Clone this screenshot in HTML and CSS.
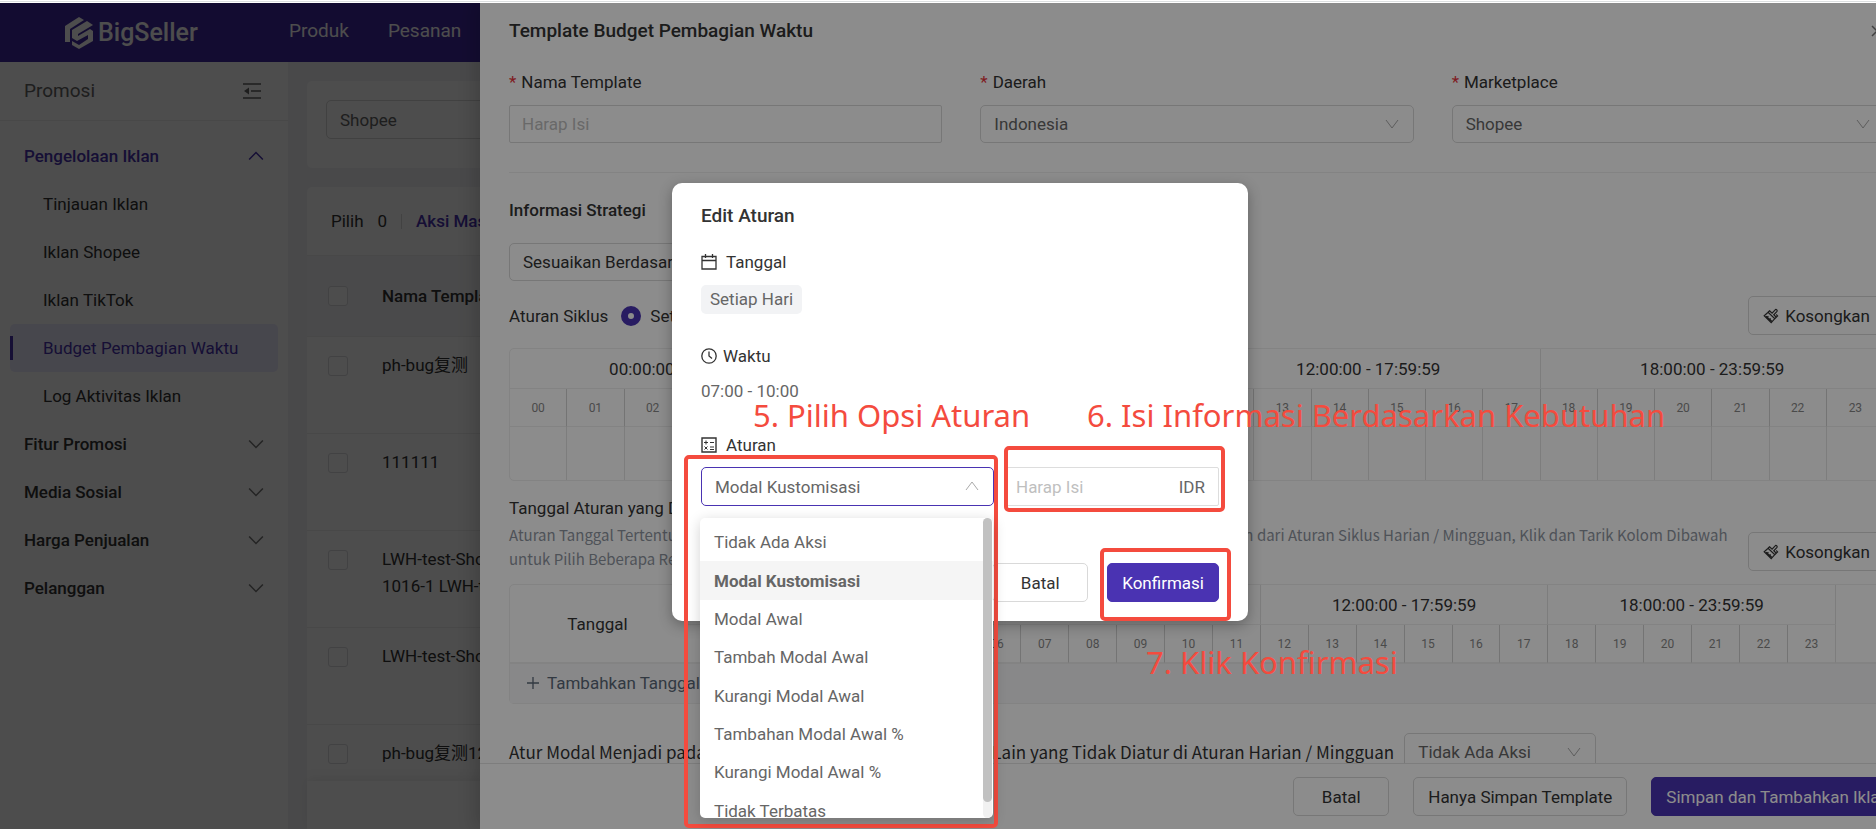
FILE: index.html
```html
<!DOCTYPE html>
<html lang="id">
<head>
  <meta charset="UTF-8" />
  <meta name="viewport" content="width=device-width, initial-scale=1.0"/>
  <title>Template Budget Pembagian Waktu</title>
  <link rel="stylesheet" href="styles.css">
</head>
<body>
  <svg class="defs" aria-hidden="true">
    <symbol id="down" viewBox="0 0 14 14"><path d="M1 3l6 8 6-8" fill="none" stroke="currentColor"/></symbol>
    <symbol id="arrow" viewBox="0 0 14 14"><path d="M1 4l6 6 6-6" fill="none" stroke="currentColor" stroke-width="1.3"/></symbol>
    <symbol id="brush" viewBox="0 0 16 16"><path d="M6.5 2.8l2.6 2.4 3.3-3.6c.9-.6 2.3.8 1.6 1.8l-3.2 3.4 2.5 2.4-1.5 1.5-6.8-6.4zM5.1 4.3L1.2 7.7l7 7 3.6-4M3.6 9.8l1.8-1.6M5.8 12.2l1.9-1.7M13.2 6.5l1.4 1.4-1.3 1.3M3.1 8.1l5.9 5.4" fill="none" stroke="currentColor" stroke-width="1.2"/></symbol>
  </svg>

  <div class="top-edge"></div>

  <div class="app">
    <header class="header">
      <div class="logo">
        <svg width="28" height="32" viewBox="0 0 28 32">
          <path d="M0 25V9L14 0l5 3L5 12v13z" fill="currentColor"/>
          <path d="M7 13L22 4l6 4-15 9v2l12-7 3 2v10L14 32l-7-4v-4l7 4 9-6v-4l-11 6-5-3z" fill="currentColor"/>
        </svg>
        <span>BigSeller</span>
      </div>
      <nav class="nav">
        <a href="#">Produk</a>
        <a href="#">Pesanan</a>
      </nav>
    </header>

    <div class="layout">
      <aside class="sidebar">
        <div class="sidebar-title">
          <span>Promosi</span>
          <svg width="18" height="16" viewBox="0 0 18 16"><path d="M0 1h18M8 8h10M0 15h18" stroke="currentColor" stroke-width="1.6"/><path d="M1 8l5-3.500v7z" fill="currentColor"/></svg>
        </div>
        <ul class="menu">
          <li class="group open"><a href="#">Pengelolaan Iklan</a><svg><use href="#arrow"/></svg></li>
          <li class="item"><a href="#">Tinjauan Iklan</a></li>
          <li class="item"><a href="#">Iklan Shopee</a></li>
          <li class="item"><a href="#">Iklan TikTok</a></li>
          <li class="item active"><a href="#">Budget Pembagian Waktu</a></li>
          <li class="item"><a href="#">Log Aktivitas Iklan</a></li>
          <li class="group"><a href="#">Fitur Promosi</a><svg><use href="#arrow"/></svg></li>
          <li class="group"><a href="#">Media Sosial</a><svg><use href="#arrow"/></svg></li>
          <li class="group"><a href="#">Harga Penjualan</a><svg><use href="#arrow"/></svg></li>
          <li class="group"><a href="#">Pelanggan</a><svg><use href="#arrow"/></svg></li>
        </ul>
      </aside>

      <main class="main">
        <div class="card filter">
          <select class="control" aria-label="Platform"><option>Shopee</option></select>
        </div>
        <div class="card list">
          <div class="toolbar"><span>Pilih</span><span>0</span><i></i><a href="#">Aksi Massal</a></div>
          <table class="list-table">
            <thead>
              <tr><th class="check"><input type="checkbox" aria-label="Pilih semua"></th><th>Nama Template</th></tr>
            </thead>
            <tbody>
              <tr><td class="check"><input type="checkbox" aria-label="ph-bug复测"></td><td>ph-bug复测</td></tr>
              <tr><td class="check"><input type="checkbox" aria-label="111111"></td><td>111111</td></tr>
              <tr><td class="check"><input type="checkbox" aria-label="LWH-test-Shopee 1016-1"></td><td>LWH-test-Shopee<br>1016-1 LWH-test</td></tr>
              <tr><td class="check"><input type="checkbox" aria-label="LWH-test-Shopee"></td><td>LWH-test-Shopee</td></tr>
              <tr><td class="check"><input type="checkbox" aria-label="ph-bug复测12"></td><td>ph-bug复测12</td></tr>
            </tbody>
          </table>
        </div>
        <div class="pager"></div>
      </main>
    </div>

    <div class="mask"></div>

    <section class="drawer">
      <div class="drawer-body">
        <div class="drawer-head">
          <h1>Template Budget Pembagian Waktu</h1>
          <button class="close" aria-label="Tutup"><svg width="12" height="12" viewBox="0 0 12 12"><path d="M1 1l10 10M11 1L1 11" stroke="currentColor" stroke-width="1.5"/></svg></button>
        </div>

        <div class="fields">
          <div class="field">
            <label for="name">Nama Template</label>
            <input class="control square" id="name" type="text" placeholder="Harap Isi">
          </div>
          <div class="field">
            <label for="region">Daerah</label>
            <div class="select"><select class="control" id="region"><option>Indonesia</option></select><svg><use href="#down"/></svg></div>
          </div>
          <div class="field">
            <label for="market">Marketplace</label>
            <div class="select"><select class="control" id="market"><option>Shopee</option></select><svg><use href="#down"/></svg></div>
          </div>
        </div>

        <h2>Informasi Strategi</h2>
        <button class="btn strategy">Sesuaikan Berdasarkan Waktu</button>

        <div class="cycle">
          <span>Aturan Siklus</span>
          <label><input type="radio" name="cycle" checked>Setiap Hari</label>
          <button class="btn clear"><svg><use href="#brush"/></svg>Kosongkan</button>
        </div>

        <table class="hours" id="cycle-table">
          <thead>
            <tr>
              <th colspan="6">00:00:00 - 05:59:59</th>
              <th colspan="6">06:00:00 - 11:59:59</th>
              <th colspan="6">12:00:00 - 17:59:59</th>
              <th colspan="6">18:00:00 - 23:59:59</th>
            </tr>
            <tr class="hour-row"></tr>
          </thead>
          <tbody><tr class="slot-row"></tr></tbody>
        </table>

        <div class="dates">
          <div>
            <h3>Tanggal Aturan yang Ditentukan</h3>
            <p>Aturan Tanggal Tertentu Akan Dijalankan Terlebih Dahulu pada Waktu yang Tersedia dan Lebih Diutamakan dari Aturan Siklus Harian / Mingguan, Klik dan Tarik Kolom Dibawah untuk Pilih Beberapa Rentang Waktu</p>
          </div>
          <button class="btn clear"><svg><use href="#brush"/></svg>Kosongkan</button>
        </div>

        <table class="hours dated" id="date-table">
          <colgroup><col class="col-date"><col span="24"><col class="col-last"></colgroup>
          <thead>
            <tr>
              <th rowspan="2">Tanggal</th>
              <th colspan="6">00:00:00 - 05:59:59</th>
              <th colspan="6">06:00:00 - 11:59:59</th>
              <th colspan="6">12:00:00 - 17:59:59</th>
              <th colspan="6">18:00:00 - 23:59:59</th>
              <th rowspan="2"></th>
            </tr>
            <tr class="hour-row"></tr>
          </thead>
          <tbody>
            <tr><td colspan="26" class="add"><button><svg width="12" height="12" viewBox="0 0 12 12"><path d="M6 0v12M0 6h12" stroke="currentColor" stroke-width="1.3"/></svg>Tambahkan Tanggal</button></td></tr>
          </tbody>
        </table>

        <div class="other">
          <label for="other">Atur Modal Menjadi pada Setiap Tanggal atau Rentang Waktu Lain yang Tidak Diatur di Aturan Harian / Mingguan</label>
          <div class="select"><select class="control" id="other"><option>Tidak Ada Aksi</option></select><svg><use href="#down"/></svg></div>
        </div>
      </div>
      <footer class="drawer-foot">
        <button class="btn cancel">Batal</button>
        <button class="btn">Hanya Simpan Template</button>
        <button class="btn primary">Simpan dan Tambahkan Iklan</button>
      </footer>
    </section>

    <div class="mask"></div>

    <section class="modal" role="dialog" aria-labelledby="modal-title">
      <h2 id="modal-title">Edit Aturan</h2>
      <div class="row-title">
        <svg width="16" height="16" viewBox="0 0 16 16"><path d="M1 2.500h14v12.500H1zM1 6.500h14M4.500 0v4M11.500 0v4" fill="none" stroke="currentColor" stroke-width="1.3"/></svg>Tanggal
      </div>
      <span class="tag">Setiap Hari</span>
      <div class="row-title time-title">
        <svg width="16" height="16" viewBox="0 0 16 16"><circle cx="8" cy="8" r="7.200" fill="none" stroke="currentColor" stroke-width="1.3"/><path d="M8 3.500V8l3 2.500" fill="none" stroke="currentColor" stroke-width="1.3"/></svg>Waktu
      </div>
      <div class="time">07:00 - 10:00</div>
      <div class="row-title">
        <svg width="16" height="16" viewBox="0 0 16 16"><path d="M1 1h14v14H1z" fill="none" stroke="currentColor" stroke-width="1.4"/><path d="M3 5.500h4M5 3.500v4M9 5.500h4M3.500 9.500l3 3M6.500 9.500l-3 3M9 10h4M9 12.500h4" fill="none" stroke="currentColor"/></svg>Aturan
      </div>
      <div class="rule-row">
        <div class="select focus"><select class="control" aria-label="Aturan"><option>Modal Kustomisasi</option></select><svg><use href="#down"/></svg></div>
        <div class="amount"><input type="text" placeholder="Harap Isi" aria-label="Modal"><span>IDR</span></div>
        <div class="dropdown">
          <ul>
            <li>Tidak Ada Aksi</li>
            <li class="selected">Modal Kustomisasi</li>
            <li>Modal Awal</li>
            <li>Tambah Modal Awal</li>
            <li>Kurangi Modal Awal</li>
            <li>Tambahan Modal Awal %</li>
            <li>Kurangi Modal Awal %</li>
            <li>Tidak Terbatas</li>
          </ul>
          <div class="scroll"><i></i></div>
        </div>
      </div>
      <div class="modal-foot">
        <button class="btn cancel">Batal</button>
        <button class="btn primary">Konfirmasi</button>
      </div>
    </section>
  </div>

  <!-- guide marks over the page -->
  <div class="mark mark-rule"></div>
  <div class="mark mark-amount"></div>
  <div class="mark mark-confirm"></div>
  <div class="note note-rule">5. Pilih Opsi Aturan</div>
  <div class="note note-amount">6. Isi Informasi Berdasarkan Kebutuhan</div>
  <div class="note note-confirm">7. Klik Konfirmasi</div>

  <script>
    document.querySelectorAll('.hour-row').forEach(row => {
      for (let i = 0; i < 24; i++) {
        const th = document.createElement('th');
        th.textContent = String(i).padStart(2, '0');
        row.appendChild(th);
      }
    });

    const slots = document.querySelector('.slot-row');
    for (let i = 0; i < 24; i++) {
      slots.appendChild(document.createElement('td'));
    }
  </script>
</body>
</html>
```
FILE: styles.css
```css
* {
  box-sizing: border-box;
}

body {
  margin: 0;
  height: 100vh;
  display: flex;
  flex-direction: column;
  position: relative;
  overflow: hidden;
  font-family: Roboto, "Noto Sans CJK SC", sans-serif;
  font-size: 17px;
  line-height: 24px;
  color: #333;
}

h1, h2, h3, p, ul {
  margin: 0;
  padding: 0;
}

ul {
  list-style: none;
}

a {
  color: inherit;
  text-decoration: none;
}

button, input, select {
  font: inherit;
  color: inherit;
  margin: 0;
}

.defs {
  display: none;
}

.top-edge {
  height: 3px;
  flex: none;
  border-bottom: 1px solid #fff;
  background: #dcdfe0;
  border-top: 1px solid #fff;
}

.app {
  flex: 1;
  min-height: 0;
  position: relative;
  overflow: hidden;
  display: flex;
  flex-direction: column;
}

.header {
  height: 59px;
  flex: none;
  background: #432ba5;
  color: #fff;
  display: flex;
  align-items: center;
}

.logo {
  width: 289px;
  padding-left: 65px;
  display: flex;
  align-items: center;
  gap: 5px;
  font-size: 25px;
  font-weight: 500;
}

.nav {
  display: flex;
  gap: 39px;
  padding-bottom: 4px;
  font-size: 19px;
}

.layout {
  flex: 1;
  min-height: 0;
  display: flex;
  background: #f5f5f8;
}

.sidebar {
  width: 288px;
  flex: none;
  background: #fff;
}

.sidebar-title {
  height: 59px;
  padding: 0 27px 0 24px;
  display: flex;
  align-items: center;
  justify-content: space-between;
  border-bottom: 1px solid #eee;
  font-size: 19px;
  color: #666;
}

.menu {
  padding: 11px 10px;
}

.menu li {
  height: 48px;
  display: flex;
  align-items: center;
  color: #333;
}

.menu svg {
  width: 16px;
  height: 16px;
  color: #777;
}

.group {
  justify-content: space-between;
  padding: 0 14px;
  font-weight: 500;
}

.menu .open {
  color: #4a33b2;
}

.menu .open svg {
  transform: rotate(180deg);
  color: #4a33b2;
}

.item {
  padding-left: 33px;
  position: relative;
}

.menu .active {
  color: #4a33b2;
  background: #edebff;
  border-radius: 5px;
}

.active::before {
  content: "";
  position: absolute;
  left: 0;
  top: 12px;
  width: 3px;
  height: 24px;
  background: #4a33b2;
}

.main {
  flex: 1;
  padding: 19px 19px 0;
  position: relative;
}

.card {
  background: #fff;
  border-radius: 5px;
}

.filter {
  padding: 19px;
  height: 87px;
  margin-bottom: 19px;
}

.filter .control {
  width: 240px;
  height: 39px;
}

.toolbar {
  height: 68px;
  padding-left: 24px;
  display: flex;
  align-items: center;
  gap: 14px;
}

.toolbar i {
  width: 1px;
  height: 15px;
  background: #ddd;
}

.toolbar a {
  color: #4a33b2;
  font-weight: 500;
}

.list-table {
  width: 100%;
  border-collapse: collapse;
}

.list-table th {
  height: 81px;
  background: #f8f8fa;
  text-align: left;
  font-weight: 500;
  border-top: 1px solid #eee;
}

.list-table td {
  height: 97px;
  padding: 15px 0 0;
  vertical-align: top;
  line-height: 27px;
  border-top: 1px solid #eee;
}

.list-table th {
  padding: 0;
}

.list-table .check {
  width: 75px;
  padding-left: 21px;
}

.check input {
  appearance: none;
  display: block;
  width: 20px;
  height: 20px;
  margin-top: 4px;
  border: 1px solid #dcdce0;
  border-radius: 3px;
  background: #fff;
}

.list-table th input {
  margin-top: 0;
}

.pager {
  position: absolute;
  left: 19px;
  right: 0;
  bottom: 0;
  height: 48px;
  background: #fff;
  box-shadow: 0 -2px 12px rgba(0, 0, 0, 0.08);
}

.mask {
  position: absolute;
  inset: 0;
  background: rgba(0, 0, 0, 0.45);
}

/* Form controls */
.control {
  appearance: none;
  width: 100%;
  height: 38px;
  padding: 0 13px;
  border: 1px solid #d9d9d9;
  border-radius: 5px;
  background: #fff;
  color: #666;
  outline: none;
}

.square {
  border-radius: 2px;
  padding: 0 12px;
}

::placeholder {
  color: #bfbfbf;
  opacity: 1;
}

.select {
  position: relative;
}

.select svg {
  position: absolute;
  right: 15px;
  top: 12px;
  width: 14px;
  height: 14px;
  color: #aaa;
  pointer-events: none;
}

.btn {
  height: 39px;
  padding: 0 14px;
  border: 1px solid #d9d9d9;
  border-radius: 5px;
  background: #fff;
  white-space: nowrap;
}

.cancel {
  width: 96px;
}

.primary {
  background: #4a33b2;
  border-color: #4a33b2;
  color: #fff;
}

/* Drawer, wider than the visible part */
.drawer {
  position: absolute;
  top: 0;
  bottom: 0;
  left: 480px;
  right: -37px;
  background: #fff;
  box-shadow: -6px 0 16px rgba(0, 0, 0, 0.15);
  display: flex;
  flex-direction: column;
}

.drawer-body {
  flex: 1;
  min-height: 0;
  overflow: hidden;
  padding: 14px 28px 0 29px;
}

.drawer-head {
  display: flex;
  justify-content: space-between;
  margin-bottom: 25px;
}

.drawer-head h1 {
  font-size: 19px;
  line-height: 28px;
  font-weight: 500;
}

.close {
  border: none;
  background: none;
  padding: 0 2px;
  color: #777;
}

.fields {
  display: grid;
  grid-template-columns: repeat(3, 1fr);
  gap: 38px;
  padding-bottom: 29px;
  border-bottom: 1px solid #eee;
  margin-bottom: 25px;
}

.field label {
  display: block;
  margin-bottom: 11px;
}

.field label::before {
  content: "*";
  color: #e8343c;
  margin-right: 5px;
}

.drawer h2 {
  font-size: 17px;
  line-height: 24px;
  font-weight: 500;
  margin-bottom: 21px;
}

.strategy {
  display: block;
  height: 38px;
  padding: 0 13px;
}

.cycle {
  display: flex;
  align-items: center;
  margin: 15px 0 13px;
}

.cycle label {
  display: flex;
  align-items: center;
  gap: 9px;
  margin-left: 13px;
}

.cycle input {
  appearance: none;
  width: 20px;
  height: 20px;
  border: 7px solid #4a33b2;
  border-radius: 50%;
  background: #fff;
}

.clear {
  margin-left: auto;
  flex: none;
  display: flex;
  align-items: center;
  gap: 6px;
}

.clear svg {
  width: 16px;
  height: 16px;
}

.hours {
  width: 100%;
  table-layout: fixed;
  border-collapse: separate;
  border-spacing: 0;
  border: 1px solid #eee;
  border-radius: 5px;
}

.hours th {
  height: 40px;
  padding: 0;
  font-weight: 400;
  border-right: 1px solid #e4e4e4;
  border-bottom: 1px solid #eee;
}

.hours .hour-row th {
  height: 38px;
  font-size: 12px;
  color: #888;
  border-right-color: #d4d4d4;
}

.hours td {
  height: 53px;
  padding: 0;
  border-right: 1px solid #e4e4e4;
}

.hours th:last-child,
.hours td:last-child {
  border-right: none;
}

.dates {
  display: flex;
  align-items: flex-end;
  gap: 18px;
  margin: 15px 0 13px;
}

.dates > div {
  max-width: 1222px;
}

.dates h3 {
  font-size: 17px;
  font-weight: 400;
  margin-bottom: 3px;
}

.dates p {
  font-family: "Noto Sans CJK SC", sans-serif;
  font-size: 15px;
  color: #8f96a1;
}

.col-date {
  width: 176px;
}

.col-last {
  width: 48px;
}

.dated .hour-row th:last-child {
  border-right: 1px solid #e4e4e4;
}

.hours .add {
  height: 40px;
  padding-bottom: 2px;
  background: #f7f8fa;
  border-top: 1px solid #eee;
}

.add button {
  display: flex;
  align-items: center;
  gap: 8px;
  margin-left: 17px;
  padding: 0;
  border: none;
  background: none;
  color: #5c6878;
}

.other {
  display: flex;
  align-items: center;
  gap: 10px;
  margin-top: 29px;
}

.other label {
  font-family: "Noto Sans CJK SC", sans-serif;
  font-size: 17px;
  white-space: nowrap;
}

.other .select {
  width: 192px;
}

.drawer-foot {
  flex: none;
  height: 66px;
  padding: 13px 9px;
  border-top: 1px solid #e4e4e4;
  display: flex;
  justify-content: flex-end;
  gap: 24px;
}

/* Modal */
.modal {
  position: absolute;
  left: 672px;
  top: 180px;
  width: 576px;
  padding: 19px 29px;
  background: #fff;
  border-radius: 10px;
  box-shadow: 0 4px 14px rgba(0, 0, 0, 0.3);
}

.modal h2 {
  font-size: 19px;
  line-height: 28px;
  font-weight: 500;
  margin-bottom: 20px;
}

.row-title {
  display: flex;
  align-items: center;
  gap: 9px;
}

.time-title {
  gap: 6px;
}

.tag {
  display: inline-block;
  margin: 11px 0 30px;
  padding: 0 9px;
  line-height: 29px;
  border-radius: 5px;
  background: #f2f3f5;
  color: #666;
}

.time {
  color: #666;
  margin: 11px 0 30px;
}

.rule-row {
  display: flex;
  gap: 10px;
  margin: 10px 0 57px;
  position: relative;
}

.rule-row .select {
  width: 293px;
  flex: none;
}

.rule-row .control {
  height: 39px;
  border-color: #4a33b2;
}

.focus svg {
  transform: rotate(180deg);
}

.amount {
  flex: 1;
  min-width: 0;
  display: flex;
  align-items: center;
  height: 39px;
  padding: 0 13px 0 11px;
  border: 1px solid #ddd;
  border-radius: 2px;
  color: #666;
}

.amount input {
  flex: 1;
  min-width: 0;
  border: none;
  padding: 0;
  outline: none;
}

.dropdown {
  position: absolute;
  top: 51px;
  left: -1px;
  width: 293px;
  height: 300px;
  overflow: hidden;
  background: #fff;
  border-radius: 5px;
  box-shadow: 0 3px 14px rgba(0, 0, 0, 0.18);
  z-index: 1;
}

.dropdown ul {
  height: 312px;
  padding-top: 5px;
  display: flex;
  flex-direction: column;
}

.dropdown li {
  flex: 1;
  display: flex;
  align-items: center;
  padding-left: 14px;
  color: #666;
}

.dropdown .selected {
  background: #f5f5f5;
  font-weight: 700;
}

.scroll {
  position: absolute;
  top: 0;
  right: 1px;
  width: 9px;
  height: 100%;
  border-radius: 5px;
  background: #f1f1f1;
}

.scroll i {
  display: block;
  height: 284px;
  border-radius: 5px;
  background: #c1c1c1;
}

.modal-foot {
  display: flex;
  justify-content: flex-end;
  gap: 19px;
}

/* Guide marks */
.mark {
  position: absolute;
  border: 4px solid #f44b3e;
  border-radius: 5px;
}

.mark-rule {
  left: 684px;
  top: 455px;
  width: 314px;
  height: 373px;
}

.mark-amount {
  left: 1004px;
  top: 446px;
  width: 221px;
  height: 66px;
}

.mark-confirm {
  left: 1100px;
  top: 548px;
  width: 131px;
  height: 73px;
}

.note {
  position: absolute;
  font-family: "Noto Sans", sans-serif;
  font-size: 31px;
  line-height: 40px;
  color: #f44b3e;
  white-space: nowrap;
}

.note-rule {
  left: 753px;
  top: 395px;
}

.note-amount {
  left: 1087px;
  top: 395px;
}

.note-confirm {
  left: 1146px;
  top: 642px;
}
```
